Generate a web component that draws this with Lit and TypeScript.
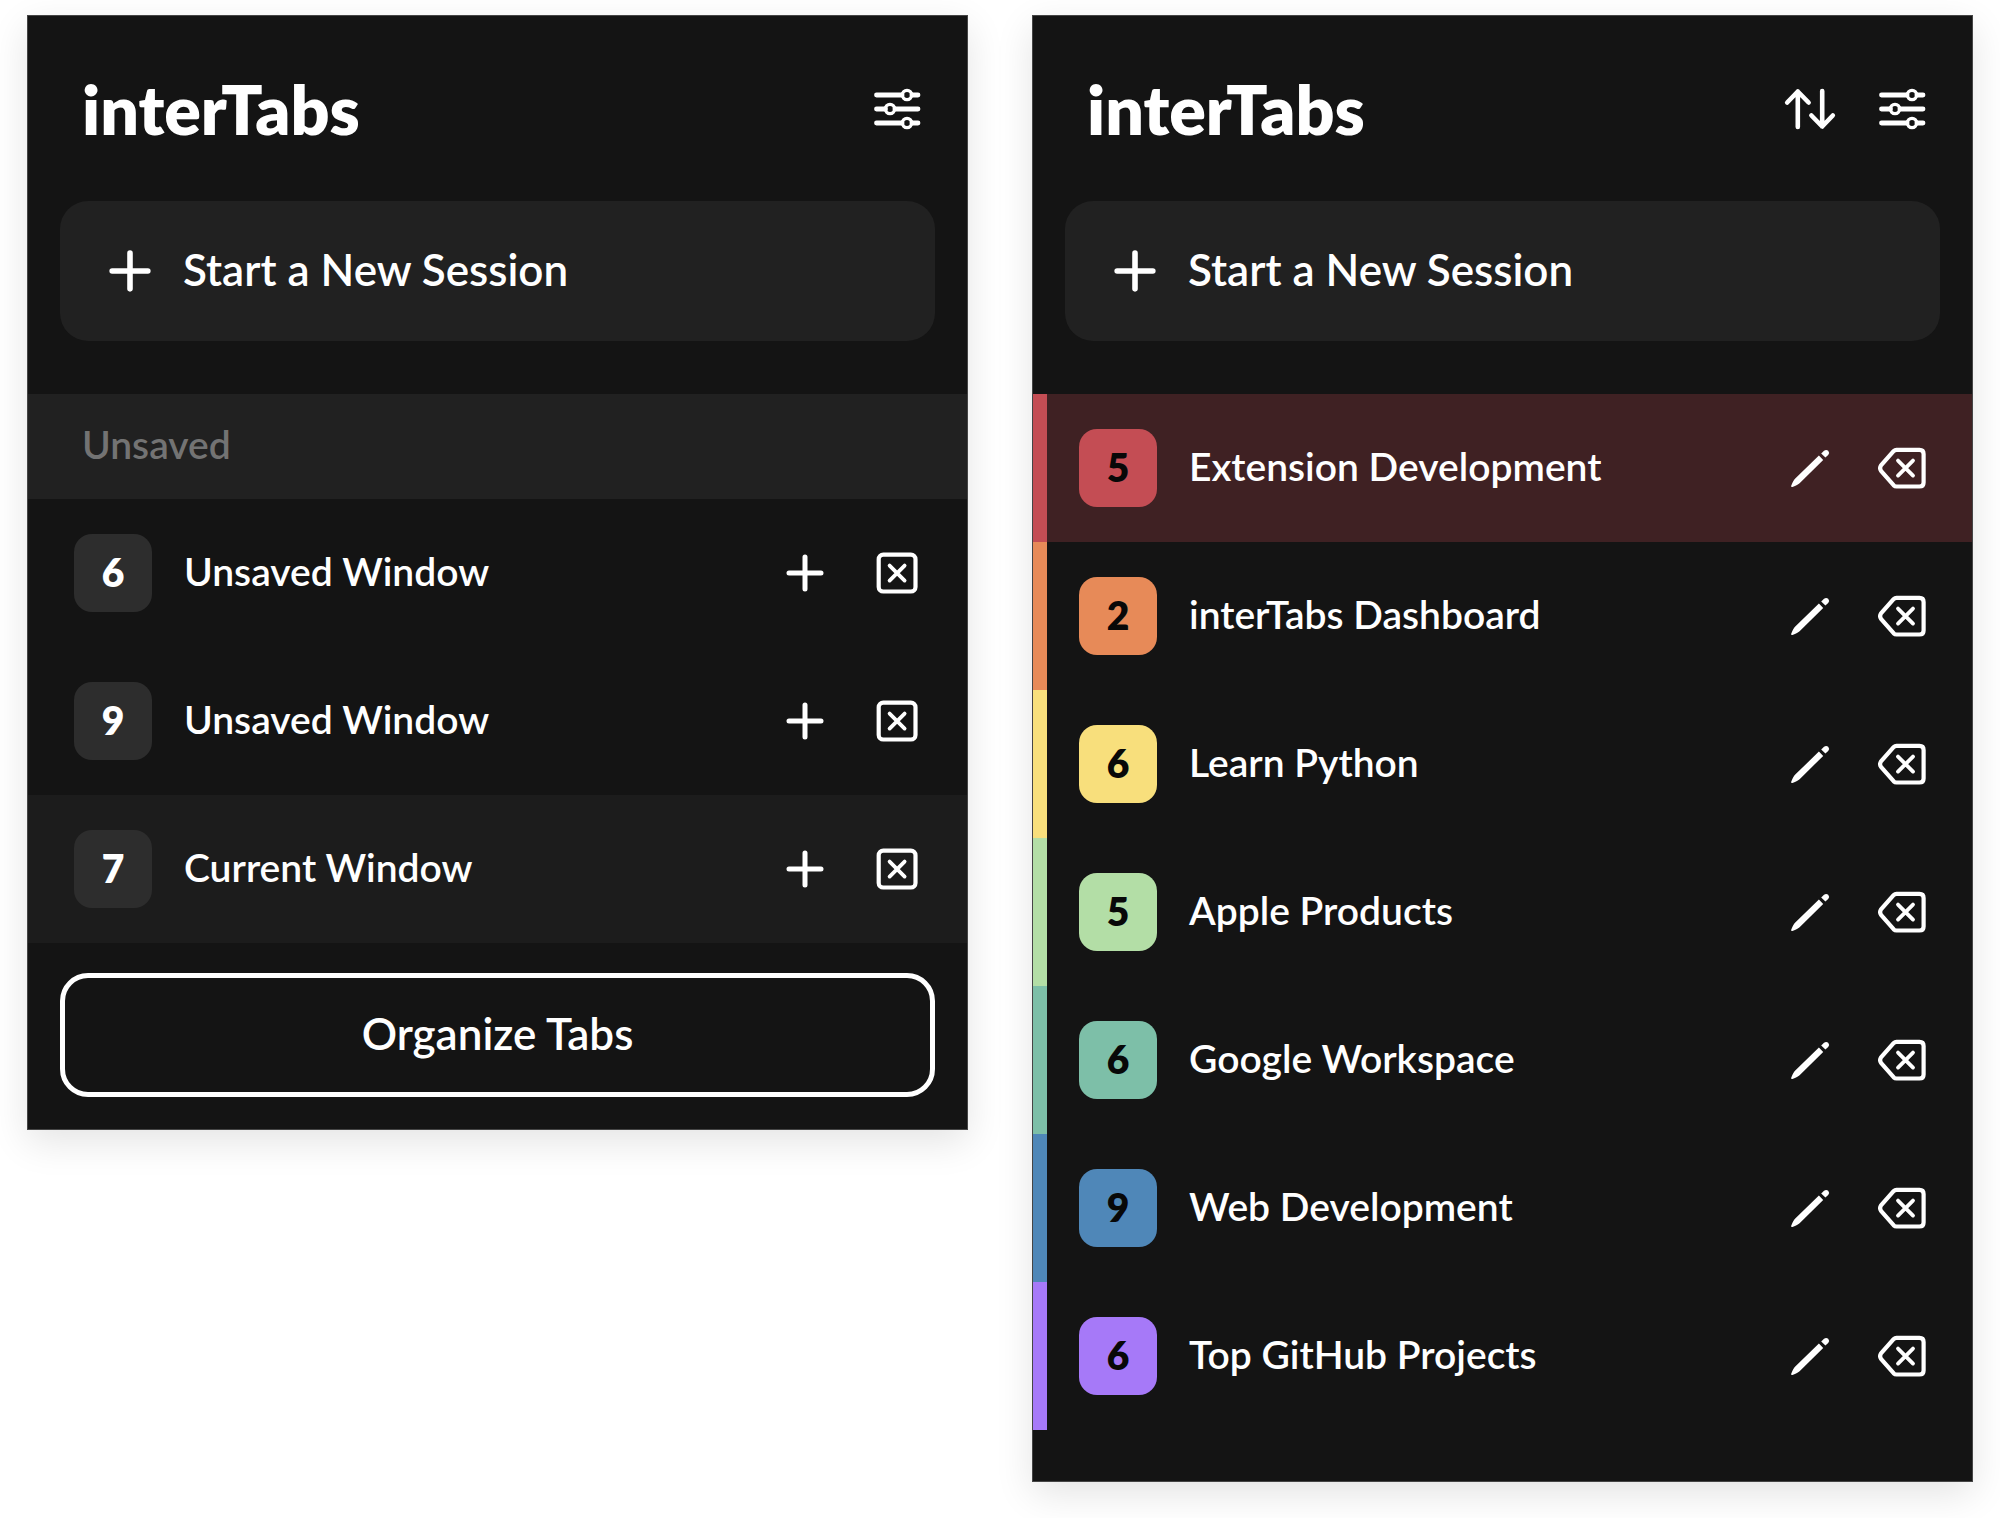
import { LitElement, html, css, svg, nothing } from "lit";
import { customElement, property } from "lit/decorators.js";
import { classMap } from "lit/directives/class-map.js";

type IconName = "plus" | "close" | "settings" | "sort" | "pencil" | "backspace";

interface Session {
  count: number;
  name: string;
  tone?: string;
  active?: boolean;
}

const unsaved: Session[] = [
  { count: 6, name: "Unsaved Window" },
  { count: 9, name: "Unsaved Window" },
  { count: 7, name: "Current Window", active: true },
];

const saved: Session[] = [
  { count: 5, name: "Extension Development", tone: "red", active: true },
  { count: 2, name: "interTabs Dashboard", tone: "orange" },
  { count: 6, name: "Learn Python", tone: "yellow" },
  { count: 5, name: "Apple Products", tone: "green" },
  { count: 6, name: "Google Workspace", tone: "teal" },
  { count: 9, name: "Web Development", tone: "blue" },
  { count: 6, name: "Top GitHub Projects", tone: "purple" },
];

/* All icons share a 52 x 52 grid. */
const shapes = {
  plus: svg`<path d="M26 10V42M10 26H42" stroke-width="5" />`,
  close: svg`
    <rect x="7.7" y="7.7" width="36.8" height="36.8" rx="4.6" stroke-width="4.2" />
    <path d="M18.6 18.6L33.6 33.6M33.6 18.6L18.6 33.6" stroke-width="3.8" />`,
  settings: svg`
    <path d="M5.5 12H31M41 12H47M5.5 26H14.5M24 26H47M5.5 40H31M41 40H47" stroke-width="4.8" />
    <g stroke-width="3.4"><circle cx="36" cy="12" r="4.6" /><circle cx="19" cy="26" r="4.6" /><circle cx="36" cy="40" r="4.6" /></g>`,
  sort: svg`
    <path d="M13.8 44V8.5M3.2 19.5L13.8 8.5L24.6 19.5M38.2 8V43.5M27.4 32.5L38.2 43.5L48.8 32.5" stroke-width="4.6" />`,
  pencil: svg`
    <path class="solid" d="M34.9 13.6L39.2 17.9L15.6 41.2Q14 42.6 8.4 45Q6.8 45.4 7.2 43.8Q9.4 38.2 11 36.8Z" />
    <path class="solid" d="M37.2 11.4L40 8.8Q42.2 7 44.2 8.8Q46 10.8 44.2 13L41.4 15.6Z" />`,
  backspace: svg`
    <path d="M20.5 7.8H43.5Q47.6 7.8 47.6 11.9V40.4Q47.6 44.5 43.5 44.5H20.5Q18.9 44.5 17.8 43.4L5 28.9Q3.2 26.2 5 23.4L17.8 8.9Q18.9 7.8 20.5 7.8Z" stroke-width="4.2" />
    <path d="M22 18.6L37 33.6M37 18.6L22 33.6" stroke-width="3.8" />`,
};

const icon = (name: IconName) => html`
  <svg class="icon" viewBox="0 0 52 52" aria-hidden="true">${shapes[name]}</svg>
`;

const shared = css`
  * {
    box-sizing: border-box;
  }
  button {
    margin: 0;
    padding: 0;
    border: 0;
    background: none;
    color: inherit;
    font: inherit;
    cursor: pointer;
  }
  .icon {
    display: block;
    width: 52px;
    height: 52px;
    fill: none;
    stroke: currentColor;
    stroke-linecap: round;
    stroke-linejoin: round;
    overflow: visible;
  }
  .solid {
    fill: currentColor;
    stroke: none;
  }
  .actions {
    display: flex;
    gap: 40px;
    flex: none;
  }
`;

@customElement("session-list")
export class SessionList extends LitElement {
  @property({ attribute: false }) sessions: Session[] = [];
  @property({ attribute: false }) actions: [IconName, string][] = [];

  static styles = [
    shared,
    css`
      :host {
        display: block;
      }
      .list {
        margin: 0;
        padding: 0;
        list-style: none;
      }
      .row {
        display: flex;
        align-items: center;
        gap: 32px;
        padding: 35px 44px 35px 32px;
        border-left: 14px solid transparent;
      }
      .row.active {
        border-left-color: #1c1c1c;
        background: #1c1c1c;
      }
      .badge {
        flex: none;
        width: 78px;
        padding-bottom: 2px;
        border-radius: 18px;
        background: #2d2d2d;
        font-size: 39px;
        font-weight: 800;
        line-height: 76px;
        text-align: center;
      }
      .name {
        flex: 1;
        padding-bottom: 4px;
        font-size: 39px;
        font-weight: 600;
        line-height: 48px;
      }
      .toned {
        border-left-color: var(--tone);
      }
      .toned .badge {
        background: var(--tone);
        color: #080808;
      }
      .toned.active {
        border-left-color: var(--tone);
        background: #3f2123;
      }
      .red { --tone: #c44d54; }
      .orange { --tone: #e78a58; }
      .yellow { --tone: #f8df7c; }
      .green { --tone: #b3dea6; }
      .teal { --tone: #7dbfa8; }
      .blue { --tone: #4f87b8; }
      .purple { --tone: #a679f8; }
    `,
  ];

  render() {
    return html`
      <ul class="list">
        ${this.sessions.map((s) => {
          const classes: Record<string, boolean> = { row: true, active: !!s.active, toned: !!s.tone };
          if (s.tone) classes[s.tone] = true;
          return html`
            <li class=${classMap(classes)}>
              <span class="badge">${s.count}</span>
              <span class="name">${s.name}</span>
              <div class="actions">
                ${this.actions.map(
                  ([name, label]) => html`<button type="button" aria-label=${label}>${icon(name)}</button>`
                )}
              </div>
            </li>
          `;
        })}
      </ul>
    `;
  }
}

@customElement("app-root")
export class AppRoot extends LitElement {
  static styles = [
    shared,
    css`
      :host {
        display: block;
        background: #ffffff;
        color: #ffffff;
        font-family: Lato, "Open Sans", sans-serif;
      }
      .page {
        display: grid;
        grid-template-columns: repeat(2, minmax(0, 1fr));
        align-items: start;
        gap: 64px;
        padding: 15px 27px 36px;
      }
      .panel {
        border: 1px solid #454545;
        background: #141414;
        box-shadow: 0 12px 36px rgba(0, 0, 0, 0.11);
      }
      .header {
        display: flex;
        align-items: center;
        justify-content: space-between;
        padding: 52px 44px 51px 54px;
      }
      .title {
        margin: 0;
        font-size: 68px;
        font-weight: 800;
        line-height: 82px;
      }
      .start {
        display: flex;
        align-items: center;
        gap: 24px;
        width: calc(100% - 64px);
        margin: 0 32px 53px;
        padding: 41px;
        border-radius: 28px;
        background: #212121;
        font-size: 44px;
        font-weight: 600;
        line-height: 52px;
      }
      .start .icon {
        width: 58px;
        height: 58px;
      }
      .start .label {
        padding-bottom: 4px;
      }
      .group {
        margin: 0;
        padding: 26px 54px 31px;
        background: #212121;
        color: #737373;
        font-size: 39px;
        font-weight: 600;
        line-height: 48px;
      }
      .organize {
        display: block;
        width: calc(100% - 64px);
        margin: 30px 32px 32px;
        padding: 29px 31px 33px;
        border: 5px solid #ffffff;
        border-radius: 28px;
        font-size: 44px;
        font-weight: 600;
        line-height: 52px;
      }
      .saved {
        padding-bottom: 51px;
      }
    `,
  ];

  private header(sortable: boolean) {
    return html`
      <header class="header">
        <h1 class="title">interTabs</h1>
        <div class="actions">
          ${sortable ? html`<button type="button" aria-label="Sort sessions">${icon("sort")}</button>` : nothing}
          <button type="button" aria-label="Settings">${icon("settings")}</button>
        </div>
      </header>
      <button class="start" type="button">
        ${icon("plus")}<span class="label">Start a New Session</span>
      </button>
    `;
  }

  render() {
    return html`
      <main class="page">
        <section class="panel">
          ${this.header(false)}
          <h2 class="group">Unsaved</h2>
          <session-list
            .sessions=${unsaved}
            .actions=${[["plus", "Save window"], ["close", "Close window"]]}
          ></session-list>
          <button class="organize" type="button">Organize Tabs</button>
        </section>
        <section class="panel saved">
          ${this.header(true)}
          <session-list
            .sessions=${saved}
            .actions=${[["pencil", "Edit session"], ["backspace", "Remove session"]]}
          ></session-list>
        </section>
      </main>
    `;
  }
}
